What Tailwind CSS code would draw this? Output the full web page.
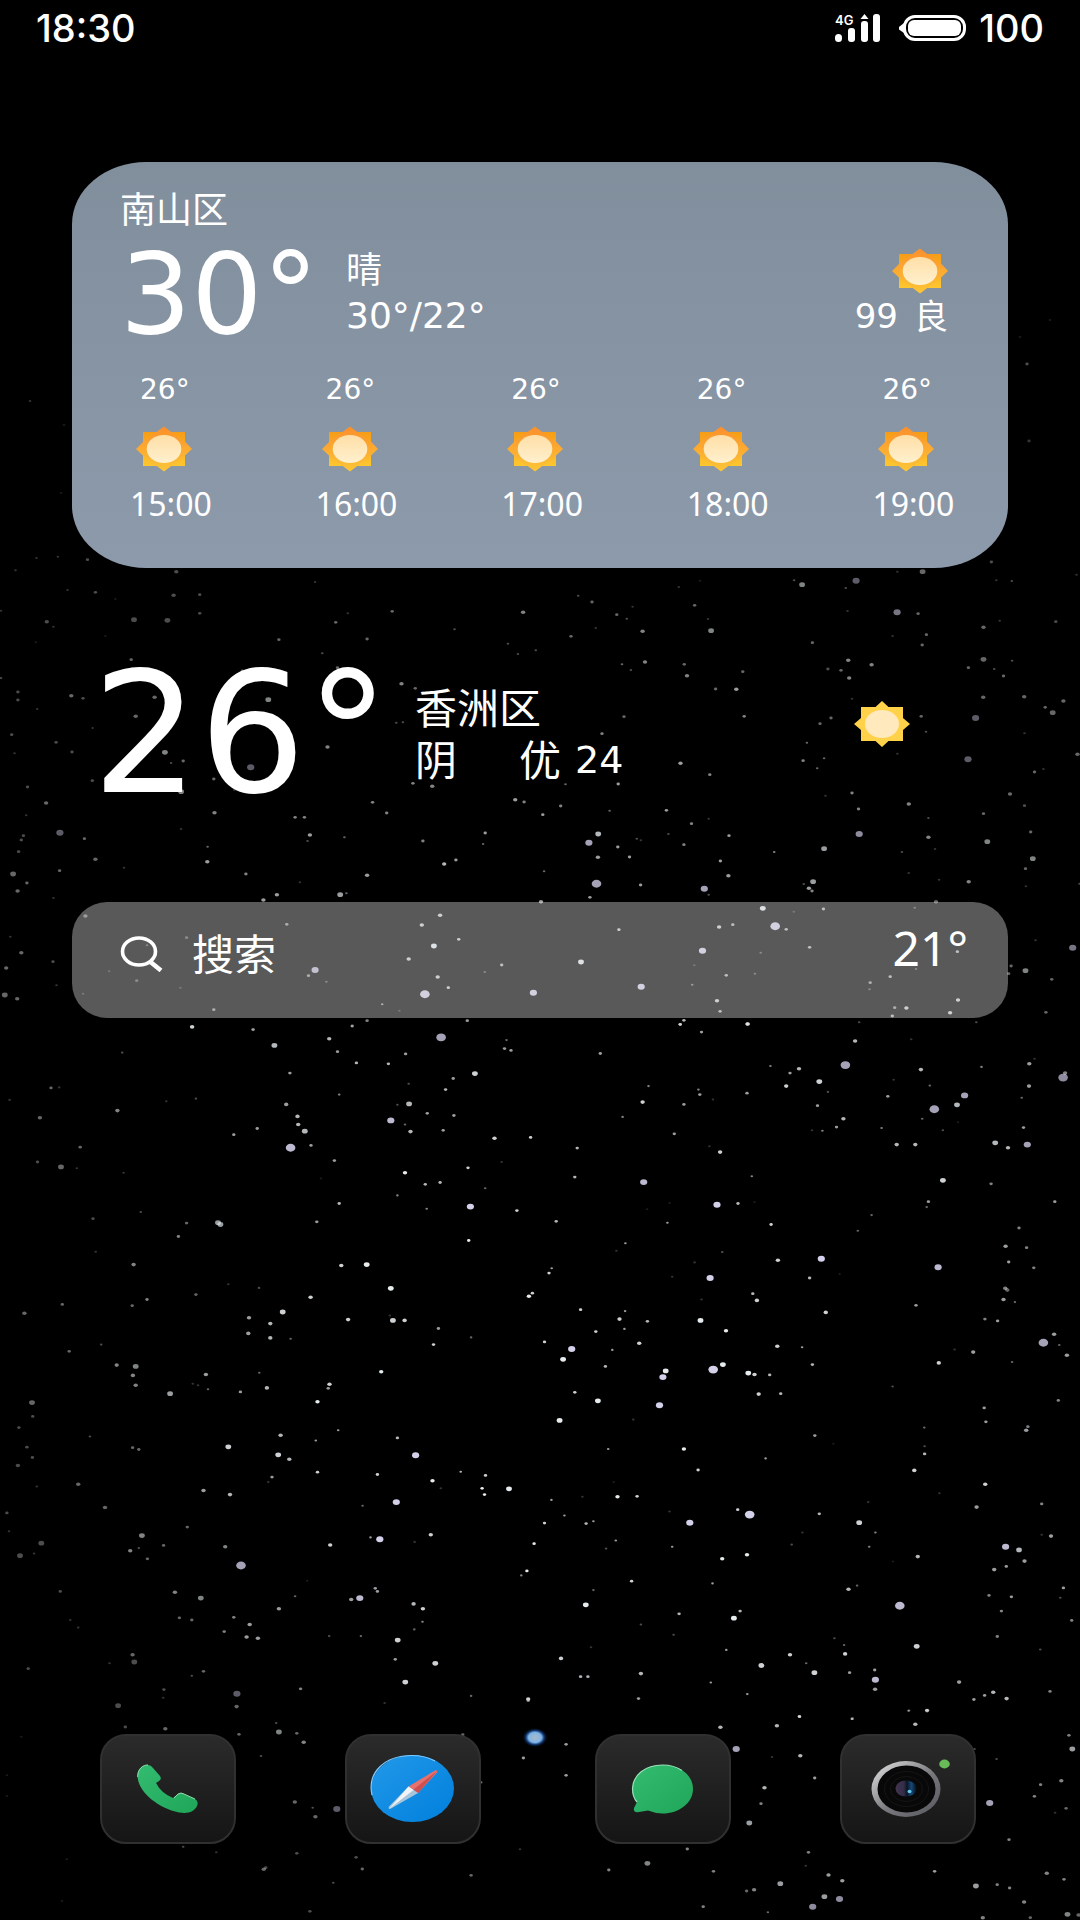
<!DOCTYPE html>
<html lang="zh-CN">
<head>
<meta charset="utf-8">
<meta name="viewport" content="width=device-width, initial-scale=1">
<title>主屏幕</title>
<script src="https://cdn.jsdelivr.net/npm/@tailwindcss/browser@4"></script>
</head>
<body class="relative flex min-h-screen flex-col overflow-x-hidden bg-black font-['Noto_Sans','Noto_Sans_CJK_SC',sans-serif] text-white">

<!-- Shared symbols -->
<svg class="absolute size-0" aria-hidden="true">
  <defs>
    <linearGradient id="sunBody" x1="0" y1="0" x2="0" y2="1"><stop offset="0" stop-color="#f69c16"/><stop offset="1" stop-color="#fdc62f"/></linearGradient>
    <linearGradient id="sunRay" x1="0" y1="0" x2="0" y2="1"><stop offset="0" stop-color="#fb8f2c"/><stop offset="1" stop-color="#fcc636"/></linearGradient>
    <linearGradient id="sunCore" x1="0" y1="0" x2="0" y2="1"><stop offset="0" stop-color="#ffdfa6"/><stop offset="1" stop-color="#fff0cf"/></linearGradient>
    <linearGradient id="tile" x1="0" y1="0" x2="0" y2="1"><stop offset="0" stop-color="#2b2b2b"/><stop offset="1" stop-color="#151515"/></linearGradient>
    <symbol id="sun" viewBox="0 0 56 46">
      <rect x="7" y="6" width="42" height="34" fill="url(#sunBody)"/>
      <path d="M28 0.500L48.500 16V15L56 23L48.500 30L28 45.500L7.500 30L0 23L7.500 15.500Z" fill="url(#sunRay)"/>
      <ellipse cx="28" cy="23" rx="17.300" ry="14" fill="url(#sunCore)"/>
    </symbol>
  </defs>
</svg>

<!-- Wallpaper -->
<svg id="stars" class="pointer-events-none absolute inset-0 h-full w-full" viewBox="0 0 1080 1920" preserveAspectRatio="xMidYMid slice" aria-hidden="true"></svg>

<header class="relative flex items-center justify-between pt-1 pr-9 pl-9 font-[Inter,sans-serif] text-[38px] leading-12 font-medium">
  <time>18:30</time>
  <div class="flex items-center gap-3">
    <div class="mr-1 flex h-7 w-12">
      <svg class="h-7 w-12 overflow-visible" viewBox="0 0 48 28" fill="#fff" role="img" aria-label="4G 信号">
        <text x="0" y="11" font-family="Inter, sans-serif" font-size="13" font-weight="600">4G</text>
        <rect x="0" y="20" width="7" height="8" rx="3.500"/><rect x="13" y="14" width="7" height="14" rx="3"/>
        <rect x="26" y="7" width="7" height="21" rx="3"/><path d="M29.500 0L33.500 5H25.500Z"/><rect x="38" y="0" width="7" height="28" rx="3"/>
      </svg>
    </div>
    <svg class="h-7 w-17" viewBox="0 0 68 28" role="img" aria-label="电池">
      <rect x="5.500" y="2.500" width="60" height="23" rx="10.500" fill="none" stroke="#fff" stroke-width="3"/>
      <rect x="9" y="6" width="53" height="16" rx="6" fill="#fff"/><path d="M5 9V19L0 15.500V13Z" fill="#fff"/>
    </svg>
    <span>100</span>
  </div>
</header>

<main class="relative flex flex-col px-18">
  <section class="mt-[110px] flex h-[406px] flex-col rounded-[74px/62px] bg-linear-to-b from-[#818e9c] to-[#8d9aab] pt-6">
    <h2 class="pl-12 text-4xl leading-12 font-normal">南山区</h2>
    <div class="flex justify-between pr-15 pl-12">
      <div class="flex">
        <p class="w-[226px] font-['DejaVu_Sans',sans-serif] text-[112px] leading-[120px]">30°</p>
        <div class="pt-3">
          <p class="text-4xl leading-12">晴</p>
          <p class="font-['DejaVu_Sans',sans-serif] text-4xl leading-11">30°/22°</p>
        </div>
      </div>
      <div class="flex flex-col items-end pt-[14px]">
        <svg class="h-[46px] w-14" role="img" aria-label="晴"><use href="#sun"/></svg>
        <p class="flex items-center gap-4 leading-11"><span class="font-['DejaVu_Sans',sans-serif] text-[34px]">99</span><span class="text-[34px]">良</span></p>
      </div>
    </div>
    <ol id="hours" class="mt-4 grid grid-cols-5 pr-2"></ol>
  </section>

  <section class="mt-[84px] flex items-center pl-5">
    <p class="w-[323px] font-['DejaVu_Sans',sans-serif] text-[168px] leading-[164px]">26°</p>
    <div class="text-[42px] leading-[52px]">
      <h2 class="font-normal">香洲区</h2>
      <p class="flex items-center"><span class="w-26">阴</span><span class="w-14">优</span><span class="font-['DejaVu_Sans',sans-serif] text-[38px]">24</span></p>
    </div>
    <svg class="mr-[98px] mb-5 ml-auto h-[46px] w-14" viewBox="0 0 56 46" role="img" aria-label="晴">
      <path d="M28 0L34.500 6H49V17L56 23L49 29V40H34.500L28 46L21.500 40H7V29L0 23L7 17V6H21.500Z" fill="#ffd24a"/><ellipse cx="28" cy="23" rx="17" ry="14" fill="#ffe9bd"/>
    </svg>
  </section>

  <label class="mt-[86px] flex h-29 items-center rounded-[35px] bg-white/35 pr-10 pb-3 pl-12">
    <svg class="mr-7 h-9 w-11 flex-none" viewBox="0 0 44 36" fill="none" stroke="#fff" aria-hidden="true"><ellipse cx="19" cy="15.500" rx="16.500" ry="13.500" stroke-width="3.600"/><path d="M30.500 26L41 34.500" stroke-width="4.500"/></svg>
    <input type="search" aria-label="搜索" placeholder="搜索" class="min-w-0 flex-1 bg-transparent text-[42px] leading-14 outline-none placeholder:text-white">
    <span class="pb-3 text-5xl leading-14">21°</span>
  </label>
</main>

<nav class="relative mt-auto flex justify-between pt-20 pr-[104px] pb-[76px] pl-[100px]" aria-label="常用应用">
  <button type="button" aria-label="电话"><svg class="h-[110px] w-[136px]" viewBox="0 0 136 110">
    <rect x="1" y="1" width="134" height="108" rx="25" fill="url(#tile)" stroke="#303030" stroke-width="2"/>
    <linearGradient id="call" x1="0" y1="0" x2="1" y2="1"><stop offset="0" stop-color="#33bb70"/><stop offset="1" stop-color="#1fa659"/></linearGradient>
    <path d="M37.500 42C37 35 43 30.500 48 31Q51 31 53 34L60 42Q62 45 59 47L56 49Q61 59 73 64L78 60Q81 58 84 60L95 65Q99 67 97 72C94 78 88 80 79 78.500C58 74 38 58 37.500 42Z" fill="url(#call)"/>
    <path d="M37.700 43C37.500 35 43 30.700 48 31M74 64L78 60Q81 58 84 60L95 65" fill="none" stroke="#93dcb0" stroke-width="1"/>
  </svg></button>
  <button type="button" aria-label="浏览器"><svg class="h-[110px] w-[136px]" viewBox="0 0 136 110">
    <rect x="1" y="1" width="134" height="108" rx="25" fill="url(#tile)" stroke="#303030" stroke-width="2"/>
    <linearGradient id="web" x1="0" y1="0" x2="1" y2="1"><stop offset="0" stop-color="#2299e9"/><stop offset="1" stop-color="#007fdc"/></linearGradient>
    <ellipse cx="67.500" cy="54.500" rx="41.500" ry="33.500" fill="url(#web)"/>
    <path d="M27 61C22 39 39 21.500 67 21.500Q80 21.500 90 27" fill="none" stroke="#80caff" stroke-width="1.200"/>
    <path d="M63.500 52.500L90 36.500Q93 35.500 92 38.500L73 59Z" fill="#e6716d"/><path d="M68.500 55.500L92 37L73 59Z" fill="#cf4f51"/>
    <path d="M63.500 52.500L73 59L46 74.500Q42.500 76 44 72.500Z" fill="#a9c5dc"/><path d="M63.500 52.500L68.500 56L44 75Z" fill="#f1f4f6"/>
  </svg></button>
  <button type="button" class="ml-1" aria-label="信息"><svg class="h-[110px] w-[136px]" viewBox="0 0 136 110">
    <rect x="1" y="1" width="134" height="108" rx="25" fill="url(#tile)" stroke="#303030" stroke-width="2"/>
    <path d="M67.500 31C85 31 98 41 98 55C98 69 84 79.500 67.500 79.500Q59 79 53 76.500L44 78Q38 79 39 74L42 68Q37.500 63 37.500 54.500C38 41 50 31 67.500 31Z" fill="url(#call)"/>
    <path d="M42 68Q37.500 63 37.500 54.500C38 41 50 31 67.500 31Q79 31 87 36.500" fill="none" stroke="#9be0b8" stroke-width="1.200"/>
  </svg></button>
  <button type="button" aria-label="相机"><svg class="h-[110px] w-[136px]" viewBox="0 0 136 110">
    <rect x="1" y="1" width="134" height="108" rx="25" fill="url(#tile)" stroke="#303030" stroke-width="2"/>
    <linearGradient id="rim" x1="0" y1="0" x2="1" y2="1"><stop offset="0" stop-color="#e6e6e6"/><stop offset=".55" stop-color="#77777c"/><stop offset="1" stop-color="#55565e"/></linearGradient>
    <linearGradient id="lens"><stop offset="0" stop-color="#43344f"/><stop offset=".4" stop-color="#322e48"/><stop offset=".55" stop-color="#0b1422"/><stop offset=".75" stop-color="#14497a"/><stop offset="1" stop-color="#08101c"/></linearGradient>
    <ellipse cx="66" cy="55" rx="34.500" ry="28" fill="url(#rim)"/><ellipse cx="66.500" cy="55" rx="29" ry="23.500" fill="#080808"/>
    <g fill="none" stroke="#151517"><ellipse cx="66.500" cy="55" rx="22" ry="17.500"/><ellipse cx="66.500" cy="55" rx="16" ry="12.500"/></g>
    <ellipse cx="66" cy="54.500" rx="10.500" ry="8" fill="url(#lens)"/><ellipse cx="69.500" cy="57.500" rx="2" ry="1.700" fill="#62c9ed"/>
    <ellipse cx="104.500" cy="30" rx="5.300" ry="4.400" fill="#69bb5a"/>
  </svg></button>
</nav>

<script>
document.getElementById('hours').innerHTML = [15, 16, 17, 18, 19].map(h => `
  <li class="flex flex-col pl-[58px]">
    <span class="pl-[10px] font-['DejaVu_Sans',sans-serif] text-[28px] leading-10">26°</span>
    <svg class="mt-4 ml-[6px] h-[46px] w-14" role="img" aria-label="晴"><use href="#sun"/></svg>
    <time class="mt-3 text-[32px] leading-10">${h}:00</time>
  </li>`).join('');

// Star charts: each sheet has its own origin and scale; entries are x, y, size(1-6) + brightness(1-9)
const sheets = [
 {ox:0, oy:550, sx:2.904, sy:3, d:`106,24,12 168,20,12 254,29,23 45,61,12 512,65,33 196,120,12 277,127,23 504,136,33 580,134,23 580,190,23 136,215,33 155,230,12 389,209,43 486,211,43 104,277,11 306,258,11 335,147,11 915,96,12 975,217,24 1010,190,12 1139,184,24 1066,267,24 1519,187,35 1320,238,13 1475,281,13 1504,312,13 1556,301,13 810,269,24 936,310,13 381,329,24 704,363,24 980,353,24 52,426,23 52,450,23 108,477,12 207,437,34 241,445,23 449,442,34 394,499,34 779,449,45 269,534,12 34,554,23 163,577,23 209,606,23 42,610,12 479,607,45 497,639,13 532,633,24 728,652,54 1166,401,35 1206,415,24 1151,518,13 1170,517,13 951,591,35 268,692,23 80,711,23 134,759,34 621,687,24 526,725,45 76,796,12 174,848,54 68,857,23 62,870,23 54,905,23 38,972,44 245,866,24 173,962,24 277,928,34 360,953,12 78,999,24 51,1023,34 155,1044,12 526,837,12 623,788,35 680,720,12 857,802,25 884,802,25 900,855,36 893,873,13 1000,862,14 603,890,14 602,935,36 714,972,25 871,997,12 1066,976,36 804,1034,36 765,1050,36 988,1034,46 1006,1030,14 1082,757,25 1123,789,25 1199,700,25 1255,709,35 1228,873,25 1409,849,26 1403,882,14 1496,749,36 1522,756,25 1290,942,37 1324,930,26 248,1098,34 30,1160,12 62,1208,34 18,1254,34 154,1235,23 164,1306,12 14,1335,44 50,1346,34 317,1264,12 241,1331,12 397,1292,23 542,1163,23 427,1186,13 524,1313,12 621,1379,25 558,1431,36 735,1438,24 833,1123,25 915,1260,57 896,1277,25 948,1295,13 1023,1428,25 1066,1412,25 1357,1412,26 1225,1125,37 1278,1096,37 1260,1188,48 1332,1168,27 1187,1227,37 1457,1245,26 1408,1266,13 1271,1281,37 1302,1313,27 1234,1333,68 1110,1363,15 1160,1382,12 1549,1328,58 3,384,13 3,182,12`},
 {ox:540, oy:550, sx:2.904, sy:3, d:`111,137,13 151,156,24 269,170,12 223,194,24 252,206,13 162,234,12 298,244,35 90,259,24 449,166,24 488,207,12 497,242,45 403,111,12 465,92,11 738,91,13 761,104,45 918,92,54 888,114,13 1038,65,12 1111,65,44 1311,36,23 1325,91,12 1370,93,13 1558,74,12 893,183,12 1037,187,55 1098,191,24 1122,254,24 1024,258,12 1110,285,24 1288,232,34 1335,212,12 1498,215,23 791,278,24 238,343,14 305,336,35 264,360,13 419,343,24 427,377,35 589,365,24 510,417,24 570,418,36 895,331,35 963,344,35 836,357,23 874,361,24 898,384,35 906,446,12 1288,328,44 1371,332,13 1244,353,24 1319,357,13 1346,378,24 1406,440,34 1287,442,34 1467,472,24 1520,453,34 1489,488,44 1265,504,54 1107,499,24 1121,545,13 845,504,24 813,521,24 593,499,25 244,500,24 180,551,25 775,578,14 764,632,25 825,625,14 805,655,14 408,640,36 493,674,25 1243,628,54 1038,611,12 1407,550,12 1462,657,12 1436,666,24 1561,613,34 227,702,26 74,703,14 829,737,12 906,729,25 925,777,25 1071,762,35 1365,732,34 1407,767,23 8,794,26 60,768,25 202,782,14 367,781,26 440,821,25 490,806,12 549,857,26 373,852,13 281,866,13 293,871,12 226,891,26 169,852,47 142,878,57 168,922,36 260,921,26 418,884,25 524,933,26 547,977,36 12,964,14 164,1001,67 477,1016,57 292,1005,26 145,1042,26 3,1055,36 490,1034,13 680,906,15 825,896,46 927,852,56 1128,804,13 1128,862,35 1051,906,13 1147,897,12 1288,791,24 1425,846,24 1299,875,45 1431,926,45 1410,956,24 1411,1009,12 1245,995,35 1159,989,12 1071,969,12 793,995,46 766,1002,13 781,1015,36 790,1023,25 1150,1055,34 1567,1001,13 647,1075,48 823,1077,26 1088,1073,13 737,1085,12 683,1129,68 715,1138,26 560,1124,26 520,1131,37 229,1139,27 472,1202,58 641,1208,13 783,1192,26 448,1246,12 624,1271,13 541,1276,26 442,1304,14 119,1236,48 294,1310,58 514,1352,37 523,1384,26 407,1423,26 418,1411,27 603,1422,37 927,1417,13 1267,1417,13 1017,1280,26 1092,1257,13 959,1298,25 957,1318,13 1030,1373,25 1064,1374,37 1023,1398,26 1191,1388,37 1214,1350,37 1212,1205,26 1368,1248,24 1361,1271,24 1410,1262,45 1547,1193,55 1486,1288,24 1469,1387,24 1439,1171,12`},
 {ox:0, oy:1020, sx:2.904, sy:2.24, d:`558,15,36 735,22,24 797,57,47 956,42,37 980,71,26 1035,96,27 1128,98,27 842,119,26 1022,14,14 1281,39,67 1178,76,26 1471,45,14 1465,64,26 1484,68,26 1379,120,48 1316,131,26 1294,156,27 1187,143,13 1154,190,13 1188,188,47 1135,225,58 1241,209,26 1318,214,26 1287,247,26 1176,234,14 1192,250,37 1436,265,38 1541,263,28 355,73,13 148,152,24 172,151,12 28,179,12 116,219,34 341,203,35 483,182,12 569,176,13 831,189,36 864,216,37 866,234,37 885,249,47 844,286,68 903,281,26 985,167,15 747,243,26 679,257,26 233,285,24 109,318,23 177,329,44 223,332,12 359,342,12 971,315,26 932,355,11 1176,342,39 1235,368,27 1278,364,27 1359,331,28 1409,377,14 1457,318,12 1366,418,59 1239,423,15 1154,393,15 1501,427,28 985,411,27 920,452,26 1361,494,29 270,445,23 409,430,13 542,455,24 518,485,25 633,454,46 640,458,46 278,519,12 388,548,35 991,550,38 1065,548,49 1135,601,49 1141,673,48 1175,673,38 1132,662,12 1536,619,39 1546,612,28 1011,671,38 1273,691,26 1259,727,28 1368,711,14 902,621,38 821,654,48 785,680,37 785,712,37 844,714,14 723,667,36 721,702,36 752,600,13 663,592,12 569,615,24 427,626,25 384,640,24 181,637,24 71,657,34 294,727,13 201,742,24 339,773,35 394,776,45 386,796,35 394,818,35 494,837,46 598,794,36 604,827,14 560,815,12 575,818,12 753,790,14 775,824,37 698,833,26 1107,788,39 957,816,38 953,825,26 922,855,39 93,857,44 95,888,23 55,913,23 78,957,23 94,980,23 52,998,33 107,1045,12 261,933,13 385,958,24 403,962,24 663,956,48 808,974,48 840,984,37 815,930,37 790,1024,26 779,1035,12 917,942,16 982,919,16 922,1013,28 1154,936,27 1207,975,59 1256,1032,39 1280,1049,12 1338,1012,17 1410,1020,28 1400,1049,29 1407,1063,29 1478,1050,49 1096,1018,28 1053,1088,14 1151,1080,59 1103,1163,59 1076,1159,16 1251,1153,38 1551,1173,29 1204,1169,12 227,1040,34 305,1092,34 20,1104,23 26,1145,12 120,1172,43 99,1195,12 58,1200,43 412,1155,45 403,1183,13 378,1189,35 428,1207,24 475,1177,24 544,1136,24 591,1054,36 668,1063,37 654,1180,35 700,1222,67 959,1176,38 1530,1234,29 1514,1244,15 1090,1273,26 1096,1280,26 1020,1298,36 1045,1295,58 1201,1308,37 1228,1319,38 1227,1348,15 1203,1365,14 1155,1389,48 1148,1432,26 1177,1483,48 1264,1441,48 1534,1521,38 1368,1514,14 1117,1530,12 175,1280,23 204,1344,12 227,1361,12 508,1282,35 583,1295,45 521,1339,24 557,1344,24 679,1338,25 725,1354,36 651,1370,25 716,1382,36 749,1385,36 810,1319,36 857,1291,14 892,1256,11 956,1380,13 1048,1380,14 385,1422,34 390,1438,43 318,1441,12 82,1453,23 591,1459,24 557,1469,13 476,1500,23 474,1518,12 343,1536,43 688,1509,54 687,1538,34 873,1498,25`},
 {ox:540, oy:1020, sx:2.904, sy:2.24, d:`407,10,26 603,9,37 469,27,26 175,75,26 315,148,15 298,184,38 240,217,15 108,287,27 390,255,26 418,189,26 460,156,15 464,167,26 502,178,12 601,164,26 669,103,15 726,119,26 752,109,37 715,148,38 811,138,48 836,161,13 887,101,67 915,47,37 806,192,26 881,221,37 861,240,26 820,248,15 790,247,12 992,242,15 1010,171,26 1027,134,12 1078,43,12 1106,111,37 1132,147,14 1145,200,67 1233,169,57 1211,190,47 1110,221,14 1170,247,13 1214,229,11 1282,105,15 1421,98,36 1436,87,12 1420,148,36 1399,174,14 1519,129,66 1525,119,35 1404,241,26 1415,279,57 1322,275,47 1359,286,37 1036,279,37 1090,279,37 1170,359,48 1310,367,25 1495,407,26 1128,407,26 1123,419,14 963,437,14 923,472,14 301,363,58 523,296,38 492,283,12 101,352,27 615,350,15 514,414,59 575,411,27 623,408,11 370,454,16 376,410,11 311,424,11 47,451,27 248,500,16 222,517,12 449,543,12 529,520,13 671,458,28 691,538,38 817,535,59 783,578,27 870,569,11 1156,554,58 1391,466,25 1352,507,36 1413,510,25 1361,542,26 1434,555,25 1351,601,35 1357,605,34 1346,626,36 1379,632,14 494,578,59 34,556,16 26,567,28 384,575,12 469,626,12 618,613,27 630,628,38 830,655,38 1092,639,26 1292,670,25 1329,674,26 118,649,28 247,652,16 231,670,38 245,692,16 312,675,27 162,698,28 288,724,38 466,673,49 540,696,39 13,721,28 92,737,59 67,760,49 210,739,16 190,776,27 365,786,49 357,800,59 503,783,69 531,772,49 605,791,49 623,794,38 667,795,27 635,838,38 699,837,27 689,731,38 761,733,16 791,772,27 1158,768,38 1258,744,36 1204,738,12 1371,766,14 1462,723,67 1493,704,36 1508,728,14 1530,751,36 1505,852,25 1412,919,36 1417,911,25 1290,869,26 1295,900,26 1024,821,13 101,834,28 168,853,49 57,897,49 347,863,59 271,895,12 198,961,16 418,961,39 459,1008,28 798,931,26 852,949,11 655,982,16 1116,913,14 1117,955,13 1117,972,27 1087,1009,38 1160,1060,12 1293,1040,38 1268,1091,36 1457,1084,25 33,1075,16 123,1068,12 225,1068,39 282,1067,28 376,1101,12 214,1035,11 71,1110,16 13,1127,28 134,1128,27 155,1123,16 220,1166,16 192,1184,13 435,1126,59 574,1097,28 609,1108,69 384,1180,16 529,1207,39 601,1198,39 731,1175,13 762,1148,12 811,1106,27 927,1126,48 974,1148,15 953,1080,12 956,1180,15 1025,1213,11 1097,1202,37 1352,1180,58 1391,1187,47 1407,1212,36 1354,1224,26 1319,1231,36 1484,1156,36 1457,1153,12 1304,1289,25 1369,1292,26 1340,1324,25 1520,1272,26 1511,1294,13 1544,1345,25 1328,1381,25 1453,1410,13 1045,1312,68 896,1275,37 921,1267,14 266,1257,28 501,1262,16 155,1277,14 133,1310,49 404,1330,27 581,1324,27 563,1340,49 293,1354,13 388,1377,13 148,1405,12 61,1430,38 118,1471,27 139,1471,27 293,1464,37 286,1520,26 541,1411,16 643,1446,48 726,1422,38 773,1441,14 797,1462,48 883,1400,14 855,1385,13 886,1420,38 1094,1403,48 899,1462,26 972,1456,26 974,1478,58 973,1499,36 496,1484,16 602,1510,16 753,1560,26 907,1565,25 1217,1483,36 1260,1522,26 1291,1513,26 1316,1506,37 1355,1520,37 1481,1504,25 1072,1547,14 1124,1547,36`},
 {ox:0, oy:1700, sx:1.452, sy:3, d:`31,110,11 182,81,23 240,86,34 401,69,13 405,96,45 431,100,24 441,127,35 347,103,24 379,168,13 428,306,34 454,323,13 458,350,34 489,327,54 266,440,13 314,457,12 431,460,23 517,472,23 526,507,24 383,508,34 386,503,23 684,526,24 484,548,13 450,634,23 97,478,11 90,603,11 10,226,11 10,288,11 672,104,24 698,247,24 755,448,12 822,133,26 760,174,26 822,226,26 767,2,25 1046,82,37 1128,77,37 1161,50,27 1237,57,15 1329,73,37 1319,32,14 1346,31,26 1069,147,57 1162,167,37 1121,171,12 1183,234,26 1110,263,37 1105,311,25 1088,369,46 1415,147,13 1447,177,13 1552,106,25 1557,147,46 1541,242,35 1511,254,25 1502,289,25 1437,309,57 1548,325,24 1532,338,12 1465,419,25 998,447,25 940,490,45 884,510,25 1036,514,25 1174,457,25 1170,497,12 1203,525,36 1223,542,36 1133,551,46 1084,573,24 1095,569,35 1197,590,46 1219,597,56 1180,620,56 1115,637,14 1021,620,25 1357,514,26 1417,558,46 1448,554,25 1466,564,25 1520,520,35 1545,538,25 1487,606,35 1496,653,24 1427,653,35 1550,643,45 1566,645,34`},
 {ox:0, oy:0, sx:1, sy:1, d:`30,401,12 64,425,11 1027,364,23 1020,337,11 1029,441,22 1050,320,11 61,493,11`}
];
const radius = [0, 1.3, 1.7, 2.2, 2.9, 3.6, 4.8];
const glow = '<radialGradient id="halo"><stop offset="0" stop-color="#a9b9c8"/><stop offset=".5" stop-color="#7fb4e6"/><stop offset=".7" stop-color="#123a78"/><stop offset="1" stop-color="#000" stop-opacity="0"/></radialGradient><ellipse cx="535" cy="1737.500" rx="13" ry="10" fill="url(#halo)"/>';
document.getElementById('stars').innerHTML = glow + sheets.map(s => s.d.split(' ').map(t => {
  const [x, y, k] = t.split(',');
  const r = radius[+k[0]];
  return `<ellipse cx="${(s.ox + x / s.sx).toFixed(1)}" cy="${(s.oy + y / s.sy).toFixed(1)}" rx="${r}" ry="${(r * .82).toFixed(2)}" fill="${+k[0] > 4 ? '#d3d0ea' : '#e6ebee'}" opacity="${Math.min(1, k[1] / 9).toFixed(2)}"/>`;
}).join('')).join('');
</script>
</body>
</html>
